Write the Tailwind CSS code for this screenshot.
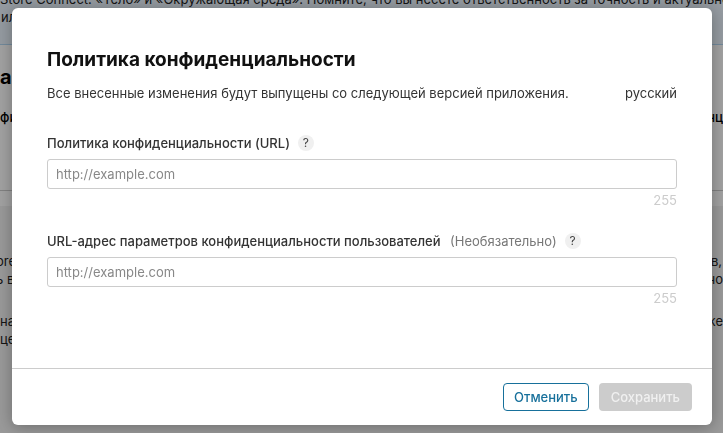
<!DOCTYPE html>
<html lang="ru">
<head>
    <meta charset="UTF-8">
    <meta name="viewport" content="width=device-width, initial-scale=1.0">
    <title>Политика конфиденциальности</title>
    <script src="https://cdn.jsdelivr.net/npm/@tailwindcss/browser@4"></script>
</head>
<body class="min-h-screen overflow-hidden bg-[#f2f2f2] font-['Inter',sans-serif] text-[13px] leading-[18px] text-[#333]">
    <!-- Page under the dialog -->
    <main class="whitespace-nowrap text-[#222]" aria-hidden="true">
        <div class="border-b border-[#b4d8f4] bg-[#eaf4fd] pb-[18px]">
            <p class="-mt-[10px]">Store Connect: «Тело» и «Окружающая среда». Помните, что вы несете ответственность за точность и актуальнос</p>
            <p class="pl-px">или</p>
        </div>
        <section class="bg-white pt-5 pb-[15px]">
            <h2 class="text-xl leading-6 font-bold text-black">а</h2>
            <div class="mt-[19px] flex justify-between border-b border-[#ccc] pb-16 font-medium text-black"><span>фи</span><span>нц</span></div>
        </section>
        <section class="-ml-1 pt-[46px]">
            <div class="flex justify-between"><span>ore</span><span class="pr-px">в,</span></div>
            <div class="flex justify-between"><span>ь в</span><span>но</span></div>
            <div class="mt-6 flex justify-between"><span class="pl-1">на</span><span>же</span></div>
            <div class="pl-1">це</div>
        </section>
    </main>

    <div class="fixed inset-0 bg-black/37 py-2 pr-[11px] pl-3">
        <form class="flex h-full flex-col rounded-md bg-white shadow-[0_2px_16px_rgba(0,0,0,0.3)]" role="dialog" aria-labelledby="dialog-title">
            <div class="flex-1 px-[35px] pt-10">
                <h1 id="dialog-title" class="text-[19px] leading-6 font-bold text-[#111]">Политика конфиденциальности</h1>
                <div class="mt-3 flex justify-between">
                    <p>Все внесенные изменения будут выпущены со следующей версией приложения.</p>
                    <span>русский</span>
                </div>

                <div class="mt-8 flex items-center">
                    <label for="policy-url" class="font-medium">Политика конфиденциальности (URL)</label>
                    <button type="button" aria-label="Справка" class="ml-2 size-4 rounded-full bg-[#f0f0f0] text-center text-[12px] leading-4 text-[#444]">?</button>
                </div>
                <input id="policy-url" type="url" placeholder="http://example.com" class="mt-[7px] block h-[30px] w-full rounded-[3px] border border-[#ccc] px-2 placeholder:text-[#888]">
                <p class="mt-0.5 text-right text-[#ccc]">255</p>

                <div class="mt-[23px] flex items-center">
                    <label for="choices-url" class="font-medium">URL-адрес параметров конфиденциальности пользователей <span class="ml-1.5 font-normal text-[#777]">(Необязательно)</span></label>
                    <button type="button" aria-label="Справка" class="ml-2 size-4 rounded-full bg-[#f0f0f0] text-center text-[12px] leading-4 text-[#444]">?</button>
                </div>
                <input id="choices-url" type="url" placeholder="http://example.com" class="mt-[7px] block h-[30px] w-full rounded-[3px] border border-[#ccc] px-2 placeholder:text-[#888]">
                <p class="mt-0.5 text-right text-[#ccc]">255</p>
            </div>

            <div class="flex justify-end gap-2.5 border-t border-[#ccc] px-5 py-3.5">
                <button type="button" class="h-7 rounded border border-[#17709b] px-2.5 font-medium text-[#17709b]">Отменить</button>
                <button type="submit" disabled class="h-7 rounded bg-[#ccc] px-3 font-medium text-[#f0f0f0]">Сохранить</button>
            </div>
        </form>
    </div>
</body>
</html>
